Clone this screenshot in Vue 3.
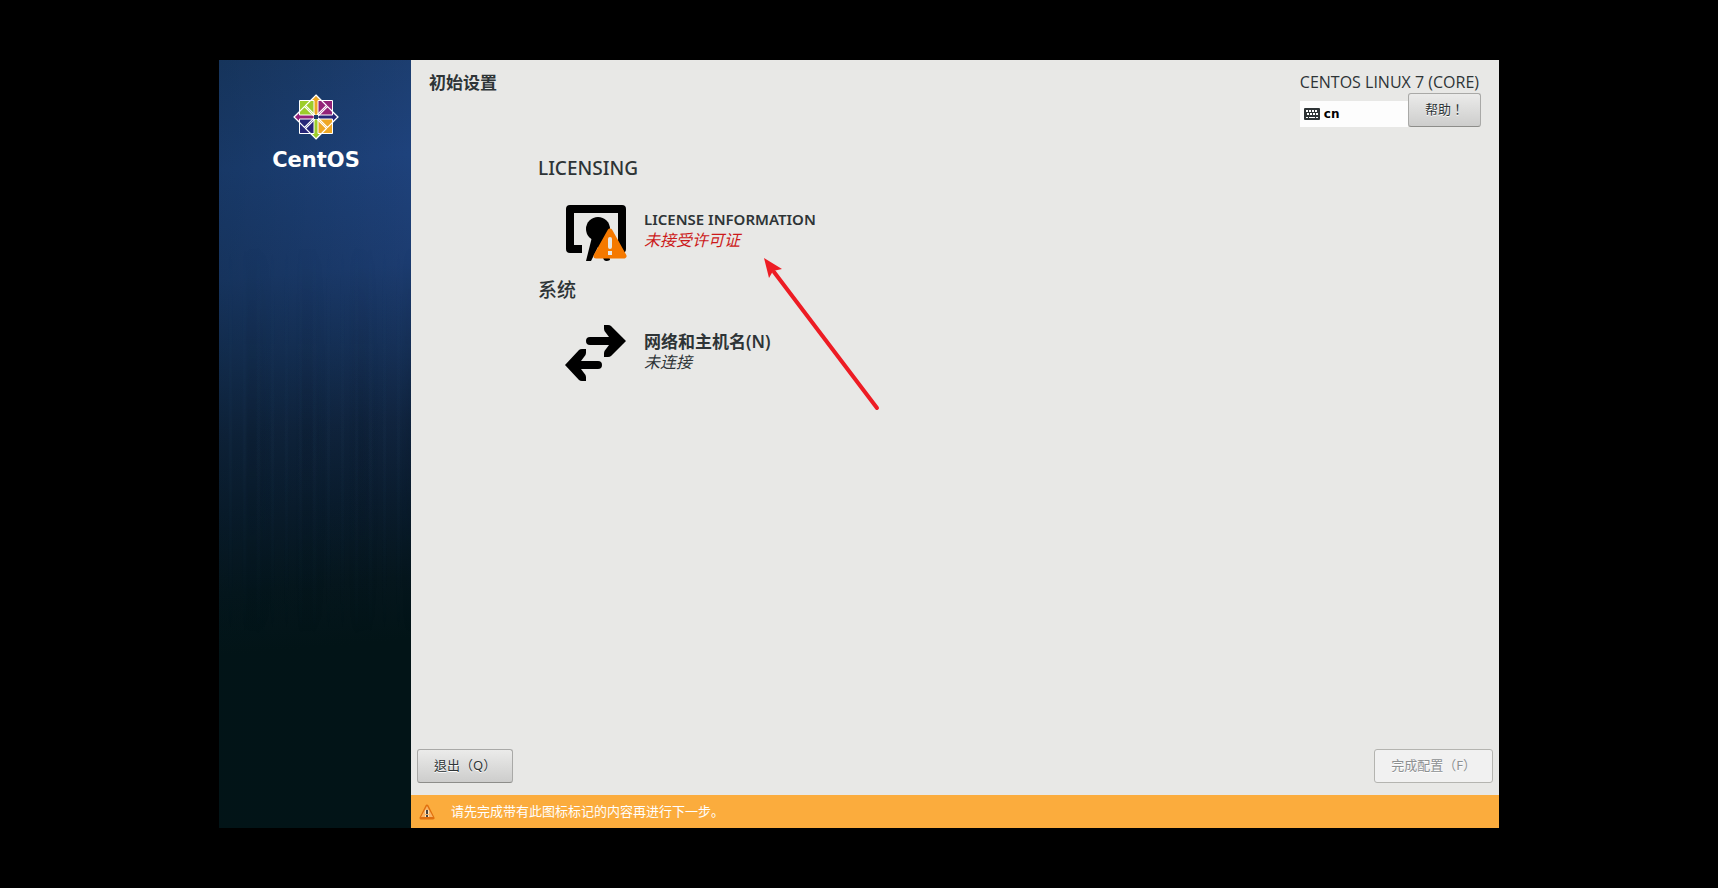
<script setup>
import { ref } from 'vue'

const layout = ref('cn')

//许可证和网络两个分组
const groups = [
  {
    title: 'LICENSING',
    icon: 'license',
    name: 'LICENSE INFORMATION',
    status: '未接受许可证',
    warn: true
  },
  {
    title: '系统',
    icon: 'network',
    name: '网络和主机名(N)',
    status: '未连接',
    warn: false
  }
]
</script>

<template>
  <div class="screen">
    <div class="window">
      <aside class="sidebar">
        <svg class="logo" viewBox="0 0 46 46" width="46" height="46">
          <g stroke="#fff" stroke-width="1">
            <path d="M6.500 6.500h16v16h-16z" fill="#9ccd2a" />
            <path d="M23.500 6.500h16v16h-16z" fill="#932279" />
            <path d="M6.500 23.500h16v16h-16z" fill="#262577" />
            <path d="M23.500 23.500h16v16h-16z" fill="#efa724" />
          </g>
          <g stroke="#fff" stroke-width="1">
            <path d="M23 1l5 5.500h-3v15h-4v-15h-3z" fill="#efa724" />
            <path d="M45 23l-5.500 5v-3h-15v-4h15v-3z" fill="#262577" />
            <path d="M23 45l-5-5.500h3v-15h4v15h3z" fill="#9ccd2a" />
            <path d="M1 23l5.500-5v3h15v4h-15v3z" fill="#932279" />
          </g>
          <g stroke="#fff" stroke-width="1.200" fill="none">
            <path d="M23 1l10.500 10.500L23 22 12.500 11.500z" />
            <path d="M23 45l10.500-10.500L23 24 12.500 34.500z" />
            <path d="M1 23l10.500-10.500L22 23 11.500 33.500z" />
            <path d="M45 23L34.500 12.500 24 23l10.500 10.500z" />
          </g>
          <path d="M21 21h4v4h-4z" fill="#1c3d6e" />
        </svg>
        <div class="brand">CentOS</div>
      </aside>

      <main class="main">
        <header class="header">
          <h1 class="title">初始设置</h1>
          <div class="headerRight">
            <div class="product">CENTOS LINUX 7 (CORE)</div>
            <div class="tools">
              <div class="layout">
                <svg viewBox="0 0 16 12" width="16" height="12">
                  <rect width="16" height="12" rx="1" fill="#2e3436" />
                  <path d="M2 3h12M3 6h11" stroke="#fff" stroke-width="2" stroke-dasharray="2 1" />
                  <path d="M2 9.500h2M5 9.500h6M12 9.500h2" stroke="#fff" />
                </svg>
                <span>{{ layout }}</span>
              </div>
              <button class="btn" type="button">帮助！</button>
            </div>
          </div>
        </header>

        <section class="content">
          <div v-for="g in groups" :key="g.icon" class="group">
            <h2 class="groupTitle">{{ g.title }}</h2>
            <div class="item">
              <svg v-if="g.icon === 'license'" class="icon" viewBox="0 -6 62 64" width="62" height="64">
                <path d="M5 1h52a4 4 0 0 1 4 4v40a4 4 0 0 1-4 4H45V41h8V9H9v32h8v8H5a4 4 0 0 1-4-4V5a4 4 0 0 1 4-4z" />
                <circle cx="33" cy="25" r="12" />
                <path d="M27 33h14l4 23q-4 2-6 0l-6-13-7 14h-5z" />
                <path d="M45 27L59 52H31z" fill="#f57900" stroke="#f57900" stroke-width="5" stroke-linejoin="round" />
                <path d="M45 35v8" stroke="#e8e8e6" stroke-width="4" stroke-linecap="round" />
                <path d="M43 47h4v4h-4z" fill="#e8e8e6" />
              </svg>
              <svg v-else class="icon" viewBox="1 -4 62 64" width="62" height="64">
                <path d="M26 13h19l-3-4q-2-2-2-4V1h4q2 0 3 1l15 15-15 15q-1 1-3 1h-4v-4q0-2 2-4l3-4H26a4 4 0 0 1 0-8z" />
                <path d="M34 45H17l3 4q2 2 2 4v4h-4q-2 0-3-1L1 41l14-15q1-1 3-1h4v4q0 2-2 4l-3 4h17a4 4 0 0 1 0 8z" />
              </svg>
              <div class="info">
                <div class="name" :class="{ local: g.icon === 'network' }">{{ g.name }}</div>
                <div class="status" :class="{ warn: g.warn }">{{ g.status }}</div>
              </div>
            </div>
          </div>
          <!--指向许可证的红色箭头-->
          <svg class="pointer" viewBox="0 0 118 154" width="118" height="154">
            <path d="M10 14L113 150" stroke="#ed1c24" stroke-width="4" stroke-linecap="round" />
            <path d="M0 0l18 11-9 2-4 7z" fill="#ed1c24" />
          </svg>
        </section>

        <footer class="actions">
          <button class="btn" type="button">退出（Q）</button>
          <button class="btn" type="button" disabled>完成配置（F）</button>
        </footer>

        <div class="notice">
          <svg viewBox="0 0 16 16" width="16" height="16">
            <path d="M8 2l6 12H2z" fill="#f08a24" stroke="#e0700f" stroke-width="3" stroke-linejoin="round" />
            <path d="M8 2l6 11H2z" fill="#f9b565" />
            <path d="M8 6v4M8 11v2" stroke="#fde3c0" stroke-width="4" />
            <path d="M8 6v4M8 11v2" stroke="#4a4640" stroke-width="2" />
          </svg>
          <span>请先完成带有此图标标记的内容再进行下一步。</span>
        </div>
      </main>
    </div>
  </div>
</template>

<style>
body {
  margin: 0;
  background: #000;
}
</style>

<style scoped>
.screen {
  box-sizing: border-box;
  min-height: 100vh;
  padding: 60px 0;
  display: flex;
  justify-content: center;
  font-family: "Noto Sans", "Noto Sans CJK SC", sans-serif;
  color: #2e3436;
}

.window {
  width: 100%;
  max-width: 1280px;
  display: flex;
}

.sidebar {
  position: relative;
  flex: 0 0 192px;
  display: flex;
  flex-direction: column;
  align-items: center;
  box-sizing: border-box;
  padding: 34px 0 0 2px;
  background:
    linear-gradient(90deg, rgba(0, 20, 24, 0.22), rgba(0, 20, 24, 0)),
    linear-gradient(175deg, #1c3d6e 0%, #1e427c 14%, #1c3c70 28%, #163159 38%, #10243f 48%, #0a1c2e 58%, #05161d 68%, #021417 76%);
}

/*背景中的竖条纹*/
.sidebar::before {
  content: "";
  position: absolute;
  inset: 0;
  background:
    repeating-linear-gradient(90deg, rgba(90, 140, 190, 0) 0 9px, rgba(90, 140, 190, 0.04) 11px 12px, rgba(90, 140, 190, 0) 14px),
    repeating-linear-gradient(90deg, rgba(0, 10, 20, 0) 0 24px, rgba(0, 10, 20, 0.08) 30px 38px, rgba(0, 10, 20, 0) 53px);
  -webkit-mask-image: linear-gradient(transparent 24%, #000 50%, transparent 75%);
  mask-image: linear-gradient(transparent 24%, #000 50%, transparent 75%);
}

.brand {
  margin-top: 6px;
  font-family: "DejaVu Sans", sans-serif;
  font-size: 21px;
  line-height: 28px;
  font-weight: bold;
  color: #fff;
}

.main {
  flex: 1;
  min-width: 0;
  display: flex;
  flex-direction: column;
  background: #e8e8e6;
}

.header {
  display: flex;
  justify-content: space-between;
  padding: 11px 18px 0;
}

.title {
  margin: 0;
  font-size: 17px;
  line-height: 24px;
  font-weight: bold;
}

.product {
  padding-right: 2px;
  font-family: "Open Sans", sans-serif;
  font-size: 16px;
  line-height: 22px;
}

.tools {
  display: flex;
  align-items: flex-end;
}

.layout {
  flex: 1;
  display: flex;
  align-items: center;
  gap: 4px;
  height: 26px;
  padding-left: 4px;
  box-sizing: border-box;
  background: #fdfdfd;
  font-family: "DejaVu Sans", sans-serif;
  font-size: 12px;
  font-weight: bold;
  color: #000;
}

.btn {
  height: 34px;
  padding: 0 16px 3px;
  border: 1px solid #a9a9a7;
  border-bottom-color: #8d8d8a;
  border-radius: 3px;
  background: linear-gradient(#ebebea, #cdcdcc);
  font-family: "Noto Sans", "Noto Sans CJK TC", sans-serif;
  font-size: 13px;
  color: #2e3436;
  text-shadow: 0 1px #fff;
}

.btn:disabled {
  border-color: #b4b4b0;
  background: #f1f1f1;
  color: #8d9091;
}

.content {
  position: relative;
  flex: 1;
  padding: 28px 0 0 127px;
}

.groupTitle {
  margin: 0;
  font-size: 19px;
  line-height: 26px;
  font-weight: 500;
}

.item {
  display: flex;
  align-items: center;
  gap: 17px;
  padding: 17px 0 15px 27px;
}

.name {
  font-size: 15px;
  line-height: 21px;
  font-weight: 600;
}

.local {
  font-size: 17px;
}

.status {
  font-size: 16px;
  line-height: 21px;
  font-style: italic;
}

.warn {
  color: #cc1a1a;
}

.pointer {
  position: absolute;
  left: 353px;
  top: 131px;
}

.actions {
  display: flex;
  justify-content: space-between;
  padding: 0 6px 12px;
}

.notice {
  display: flex;
  align-items: center;
  gap: 16px;
  padding: 0 8px;
  font-size: 13px;
  line-height: 33px;
  color: #fff;
  background: #fbac3d;
}
</style>
